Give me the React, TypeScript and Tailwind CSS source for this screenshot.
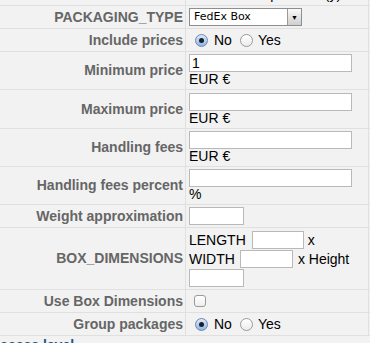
import React from "react";

type RowProps = {
    label: string;
    h: string;
    children?: React.ReactNode;
    col?: boolean;
};

// one line of the settings table: bold label on the left, field on the right
function Row({ label, h, children, col }: RowProps) {
    return (
        <div className={`flex ${h} border-b border-[#e0e0e0]`}>
            <div className="w-[186px] shrink-0 border-r border-[#e0e0e0] flex items-center justify-end pr-[2px] text-[14px] font-bold text-[#666]">
                {label}
            </div>
            <div
                className={`w-[183px] shrink-0 border-r border-[#e0e0e0] pl-[3px] ${
                    col ? "flex flex-col justify-center" : "flex items-center"
                }`}
            >
                {children}
            </div>
        </div>
    );
}

function TextInput({ w = "w-[163px]", value = "" }: { w?: string; value?: string }) {
    return (
        <div className={`${w} h-[18px] bg-white border border-[#b9b9b9] flex items-center px-[2px] text-[14px] text-black leading-none`}>
            {value}
        </div>
    );
}

function Radio({ checked }: { checked?: boolean }) {
    if (checked) {
        return (
            <span className="w-[13px] h-[13px] shrink-0 rounded-full border border-[#6f86ad] bg-gradient-to-b from-[#dceafa] to-[#8db6e6] flex items-center justify-center">
                <span className="block w-[5px] h-[5px] rounded-full bg-[#1b1f2a]" />
            </span>
        );
    }
    return <span className="block w-[13px] h-[13px] shrink-0 rounded-full border border-[#9a9a9a] bg-gradient-to-b from-white to-[#ececec]" />;
}

function RadioGroup() {
    return (
        <div className="flex items-center text-[14px] text-black pl-[6px]">
            <Radio checked />
            <span className="ml-[6px]">No</span>
            <span className="ml-[8px] flex">
                <Radio />
            </span>
            <span className="ml-[5px]">Yes</span>
        </div>
    );
}

function Checkbox() {
    return <span className="block w-[12px] h-[12px] shrink-0 rounded-[3px] border border-[#9a9a9a] bg-gradient-to-b from-white to-[#efefef]" />;
}

export default function App() {
    return (
        <div className="w-[370px] h-[343px] overflow-hidden bg-[#f2f2f2] font-['Liberation_Sans',Arial,sans-serif]">
            <div className="-mt-[17px]">
                {/* row scrolled out of view */}
                <Row label="" h="h-[23px]">
                    <span className="ml-[2px] flex">
                        <Checkbox />
                    </span>
                    <span className="ml-[5px] text-[14px] text-black whitespace-nowrap">Calculate per item (y)</span>
                </Row>

                <Row label="PACKAGING_TYPE" h="h-[23px]">
                    <div className="w-[113px] h-[18px] bg-white border border-[#8e8e8e] flex items-stretch">
                        <span className="flex-1 flex items-center pl-[4px] text-[11px] text-black font-['DejaVu_Sans',sans-serif]">FedEx Box</span>
                        <span className="w-[14px] border-l border-[#9a9a9a] bg-gradient-to-b from-[#fafafa] to-[#cfcfcf] flex items-center justify-center text-[7px] text-black leading-none">
                            ▼
                        </span>
                    </div>
                </Row>

                <Row label="Include prices" h="h-[23px]">
                    <RadioGroup />
                </Row>

                <Row label="Minimum price" h="h-[38px]" col>
                    <TextInput value="1" />
                    <span className="text-[14px] text-black leading-[15px]">EUR €</span>
                </Row>

                <Row label="Maximum price" h="h-[39px]" col>
                    <TextInput />
                    <span className="text-[14px] text-black leading-[15px]">EUR €</span>
                </Row>

                <Row label="Handling fees" h="h-[38px]" col>
                    <TextInput />
                    <span className="text-[14px] text-black leading-[15px]">EUR €</span>
                </Row>

                <Row label="Handling fees percent" h="h-[38px]" col>
                    <TextInput />
                    <span className="text-[14px] text-black leading-[15px]">%</span>
                </Row>

                <Row label="Weight approximation" h="h-[23px]">
                    <TextInput w="w-[55px]" />
                </Row>

                <Row label="BOX_DIMENSIONS" h="h-[62px]" col>
                    <div className="flex items-center h-[19px] text-[14px] text-black">
                        <span>LENGTH</span>
                        <span className="ml-[6px]">
                            <TextInput w="w-[52px]" />
                        </span>
                        <span className="ml-[4px]">x</span>
                    </div>
                    <div className="flex items-center h-[19px] text-[14px] text-black">
                        <span>WIDTH</span>
                        <span className="ml-[5px]">
                            <TextInput w="w-[53px]" />
                        </span>
                        <span className="ml-[5px]">x Height</span>
                    </div>
                    <TextInput w="w-[55px]" />
                </Row>

                <Row label="Use Box Dimensions" h="h-[23px]">
                    <span className="ml-[5px] flex">
                        <Checkbox />
                    </span>
                </Row>

                <Row label="Group packages" h="h-[23px]">
                    <RadioGroup />
                </Row>

                <div className="-ml-[10px] pt-[1px] text-[14px] font-bold text-[#23518f] leading-[16px]">Access level</div>
            </div>
        </div>
    );
}
